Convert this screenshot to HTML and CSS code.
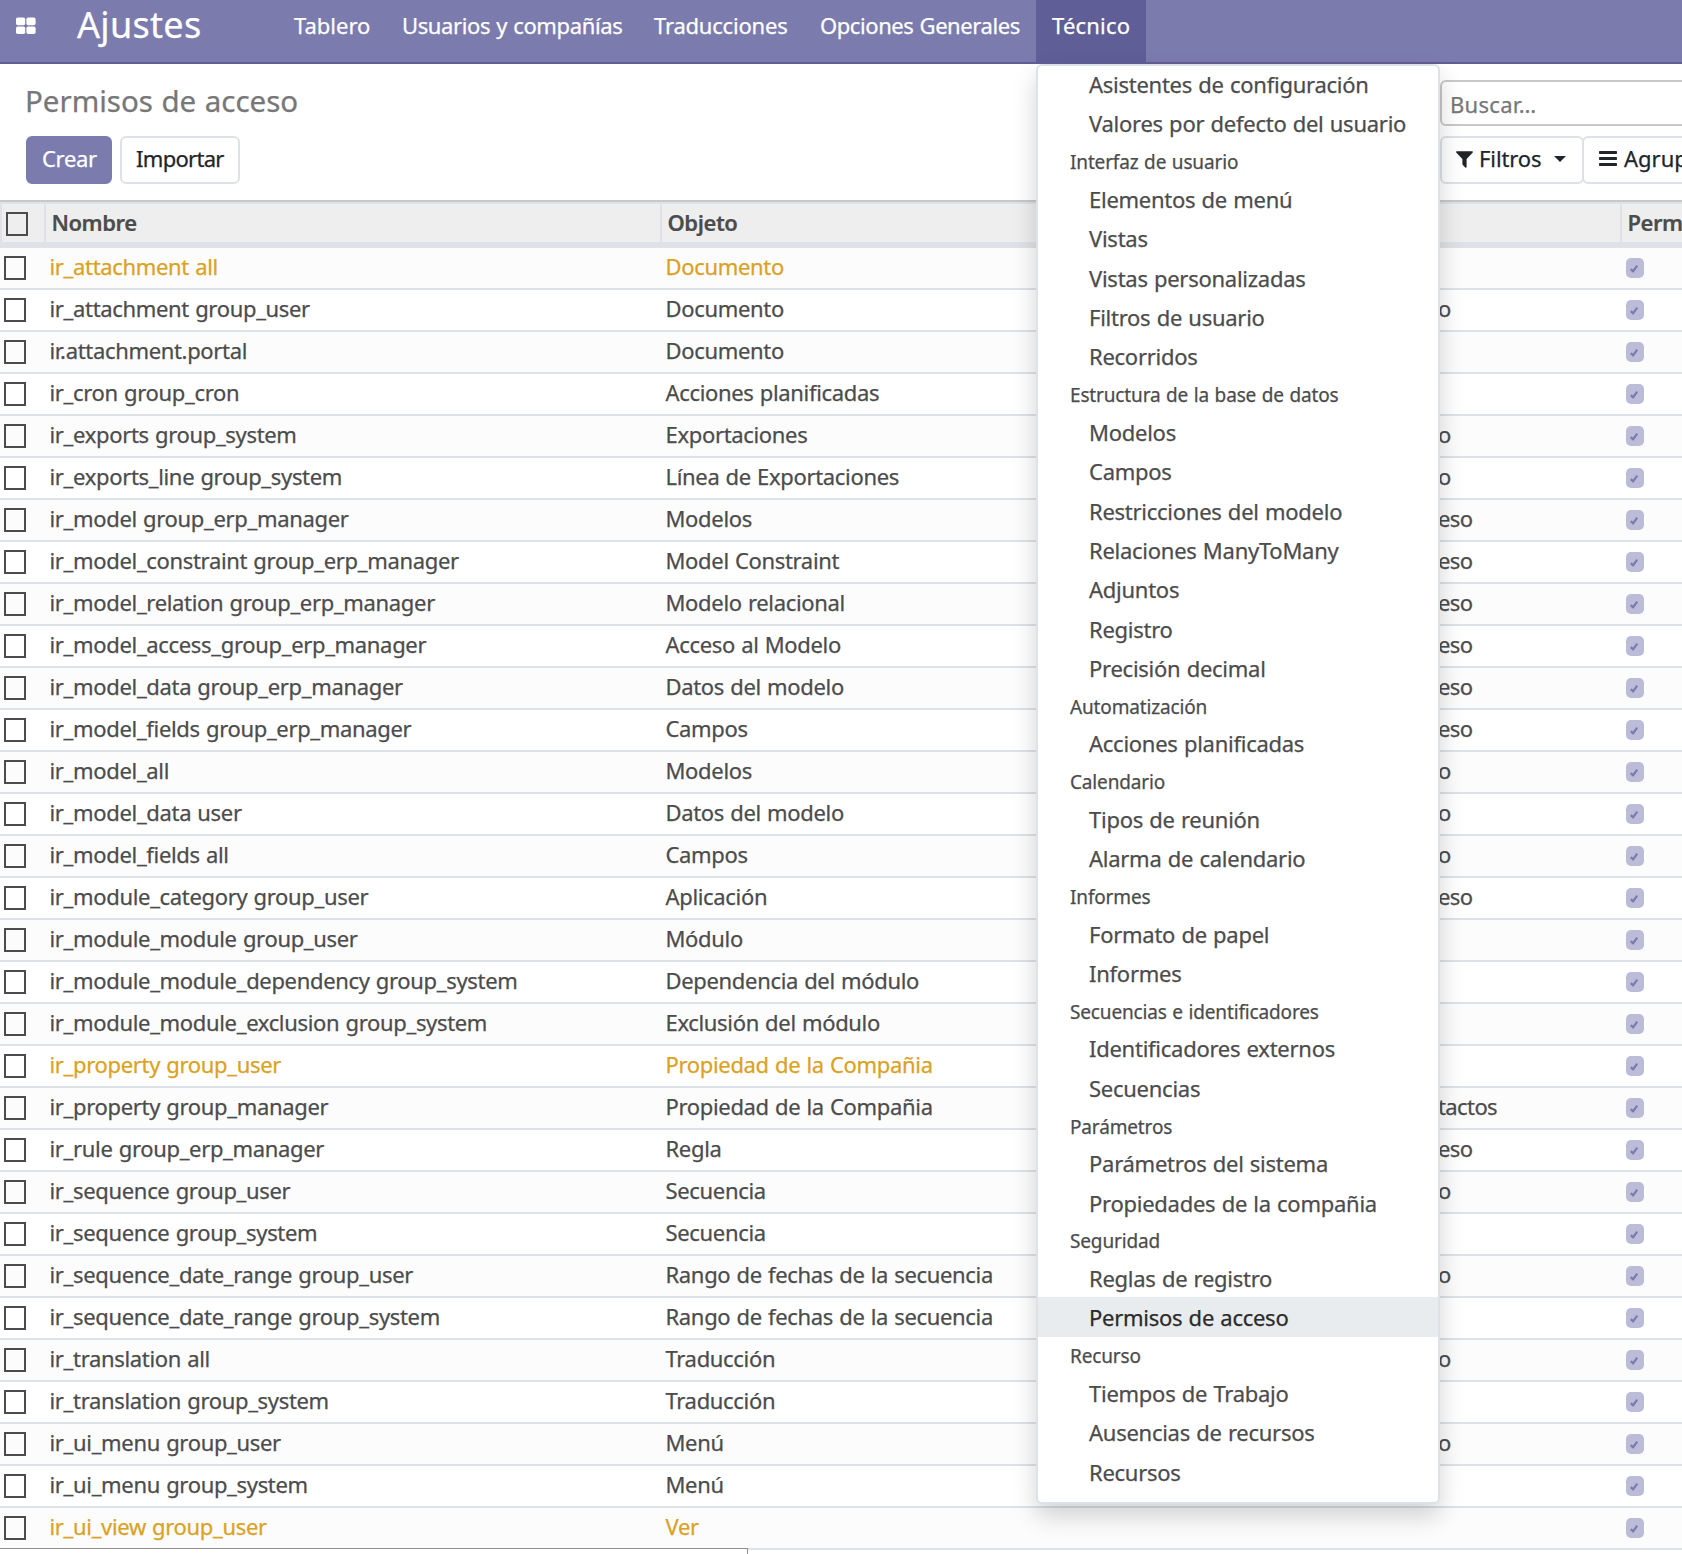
FILE: index.html
```html
<!DOCTYPE html>
<html lang="es">
<head>
<meta charset="utf-8">
<title>Ajustes - Permisos de acceso</title>
<link rel="stylesheet" href="styles.css">
</head>
<body>
<svg class="defs" width="0" height="0">
  <symbol id="tick" viewBox="0 0 18 20">
    <path d="M4.8 11.2 L7.1 13.3 L11.2 7.6" fill="none" stroke="#7c7bad" stroke-width="2.3"/>
  </symbol>
</svg>
<header class="navbar">
  <a class="apps"><svg width="20" height="18" viewBox="0 0 20 18" fill="#fff"><rect x="0" y="0.5" width="9.2" height="7.8" rx="1.8"/><rect x="10.4" y="0.5" width="9.2" height="7.8" rx="1.8"/><rect x="0" y="9.4" width="9.2" height="7.6" rx="1.8"/><rect x="10.4" y="9.4" width="9.2" height="7.6" rx="1.8"/></svg></a>
  <span class="brand">Ajustes</span>
  <nav class="menu">
    <a>Tablero</a>
    <a class="n2">Usuarios y compañías</a>
    <a class="n3">Traducciones</a>
    <a class="n4">Opciones Generales</a>
    <a class="active">Técnico</a>
  </nav>
  <div class="dropdown">
    <a>Asistentes de configuración</a>
    <a>Valores por defecto del usuario</a>
    <h6>Interfaz de usuario</h6>
    <a>Elementos de menú</a>
    <a>Vistas</a>
    <a>Vistas personalizadas</a>
    <a>Filtros de usuario</a>
    <a>Recorridos</a>
    <h6>Estructura de la base de datos</h6>
    <a>Modelos</a>
    <a>Campos</a>
    <a>Restricciones del modelo</a>
    <a>Relaciones ManyToMany</a>
    <a>Adjuntos</a>
    <a>Registro</a>
    <a>Precisión decimal</a>
    <h6>Automatización</h6>
    <a>Acciones planificadas</a>
    <h6>Calendario</h6>
    <a>Tipos de reunión</a>
    <a>Alarma de calendario</a>
    <h6>Informes</h6>
    <a>Formato de papel</a>
    <a>Informes</a>
    <h6>Secuencias e identificadores</h6>
    <a>Identificadores externos</a>
    <a>Secuencias</a>
    <h6>Parámetros</h6>
    <a>Parámetros del sistema</a>
    <a>Propiedades de la compañia</a>
    <h6>Seguridad</h6>
    <a>Reglas de registro</a>
    <a class="hover">Permisos de acceso</a>
    <h6>Recurso</h6>
    <a>Tiempos de Trabajo</a>
    <a>Ausencias de recursos</a>
    <a>Recursos</a>
  </div>
</header>
<section class="panel">
  <div class="panel-left">
    <h1>Permisos de acceso</h1>
    <div class="buttons"><span class="btn primary">Crear</span><span class="btn">Importar</span></div>
  </div>
  <div class="panel-right">
    <div class="search">Buscar…</div>
    <div class="filters">
      <span class="btn filter"><svg width="17" height="17" viewBox="0 0 17 17"><path d="M0.6 0.3H16.4Q17.2 0.8 16.6 1.7L10.6 8V16.2Q10 17 9.2 16.4L6.4 13.6V8L0.4 1.7Q-0.2 0.8 0.6 0.3Z" fill="#212529"/></svg><span class="ftext">Filtros</span><svg class="caret" width="12" height="6" viewBox="0 0 12 6"><path d="M0 0H12L6 6Z" fill="#212529"/></svg></span>
      <span class="btn group"><svg width="18" height="15" viewBox="0 0 18 15" fill="#212529"><rect width="18" height="3" rx="0.8"/><rect y="6" width="18" height="3" rx="0.8"/><rect y="12" width="18" height="3" rx="0.8"/></svg><span class="gtext">Agrupar por</span></span>
    </div>
  </div>
</section>
<main class="list">
  <div class="row head"><span><i class="cb"></i></span><span>Nombre</span><span>Objeto</span><span></span><span>Permiso</span></div>
  <div class="row warn"><i class="cb"></i><span>ir_attachment all</span><span>Documento</span><span class="g"></span><svg class="on"><use href="#tick"/></svg></div>
  <div class="row"><i class="cb"></i><span>ir_attachment group_user</span><span>Documento</span><span class="g">o</span><svg class="on"><use href="#tick"/></svg></div>
  <div class="row"><i class="cb"></i><span>ir.attachment.portal</span><span>Documento</span><span class="g"></span><svg class="on"><use href="#tick"/></svg></div>
  <div class="row"><i class="cb"></i><span>ir_cron group_cron</span><span>Acciones planificadas</span><span class="g"></span><svg class="on"><use href="#tick"/></svg></div>
  <div class="row"><i class="cb"></i><span>ir_exports group_system</span><span>Exportaciones</span><span class="g">o</span><svg class="on"><use href="#tick"/></svg></div>
  <div class="row"><i class="cb"></i><span>ir_exports_line group_system</span><span>Línea de Exportaciones</span><span class="g">o</span><svg class="on"><use href="#tick"/></svg></div>
  <div class="row"><i class="cb"></i><span>ir_model group_erp_manager</span><span>Modelos</span><span class="g">eso</span><svg class="on"><use href="#tick"/></svg></div>
  <div class="row"><i class="cb"></i><span>ir_model_constraint group_erp_manager</span><span>Model Constraint</span><span class="g">eso</span><svg class="on"><use href="#tick"/></svg></div>
  <div class="row"><i class="cb"></i><span>ir_model_relation group_erp_manager</span><span>Modelo relacional</span><span class="g">eso</span><svg class="on"><use href="#tick"/></svg></div>
  <div class="row"><i class="cb"></i><span>ir_model_access_group_erp_manager</span><span>Acceso al Modelo</span><span class="g">eso</span><svg class="on"><use href="#tick"/></svg></div>
  <div class="row"><i class="cb"></i><span>ir_model_data group_erp_manager</span><span>Datos del modelo</span><span class="g">eso</span><svg class="on"><use href="#tick"/></svg></div>
  <div class="row"><i class="cb"></i><span>ir_model_fields group_erp_manager</span><span>Campos</span><span class="g">eso</span><svg class="on"><use href="#tick"/></svg></div>
  <div class="row"><i class="cb"></i><span>ir_model_all</span><span>Modelos</span><span class="g">o</span><svg class="on"><use href="#tick"/></svg></div>
  <div class="row"><i class="cb"></i><span>ir_model_data user</span><span>Datos del modelo</span><span class="g">o</span><svg class="on"><use href="#tick"/></svg></div>
  <div class="row"><i class="cb"></i><span>ir_model_fields all</span><span>Campos</span><span class="g">o</span><svg class="on"><use href="#tick"/></svg></div>
  <div class="row"><i class="cb"></i><span>ir_module_category group_user</span><span>Aplicación</span><span class="g">eso</span><svg class="on"><use href="#tick"/></svg></div>
  <div class="row"><i class="cb"></i><span>ir_module_module group_user</span><span>Módulo</span><span class="g"></span><svg class="on"><use href="#tick"/></svg></div>
  <div class="row"><i class="cb"></i><span>ir_module_module_dependency group_system</span><span>Dependencia del módulo</span><span class="g"></span><svg class="on"><use href="#tick"/></svg></div>
  <div class="row"><i class="cb"></i><span>ir_module_module_exclusion group_system</span><span>Exclusión del módulo</span><span class="g"></span><svg class="on"><use href="#tick"/></svg></div>
  <div class="row warn"><i class="cb"></i><span>ir_property group_user</span><span>Propiedad de la Compañia</span><span class="g"></span><svg class="on"><use href="#tick"/></svg></div>
  <div class="row"><i class="cb"></i><span>ir_property group_manager</span><span>Propiedad de la Compañia</span><span class="g">tactos</span><svg class="on"><use href="#tick"/></svg></div>
  <div class="row"><i class="cb"></i><span>ir_rule group_erp_manager</span><span>Regla</span><span class="g">eso</span><svg class="on"><use href="#tick"/></svg></div>
  <div class="row"><i class="cb"></i><span>ir_sequence group_user</span><span>Secuencia</span><span class="g">o</span><svg class="on"><use href="#tick"/></svg></div>
  <div class="row"><i class="cb"></i><span>ir_sequence group_system</span><span>Secuencia</span><span class="g"></span><svg class="on"><use href="#tick"/></svg></div>
  <div class="row"><i class="cb"></i><span>ir_sequence_date_range group_user</span><span>Rango de fechas de la secuencia</span><span class="g">o</span><svg class="on"><use href="#tick"/></svg></div>
  <div class="row"><i class="cb"></i><span>ir_sequence_date_range group_system</span><span>Rango de fechas de la secuencia</span><span class="g"></span><svg class="on"><use href="#tick"/></svg></div>
  <div class="row"><i class="cb"></i><span>ir_translation all</span><span>Traducción</span><span class="g">o</span><svg class="on"><use href="#tick"/></svg></div>
  <div class="row"><i class="cb"></i><span>ir_translation group_system</span><span>Traducción</span><span class="g"></span><svg class="on"><use href="#tick"/></svg></div>
  <div class="row"><i class="cb"></i><span>ir_ui_menu group_user</span><span>Menú</span><span class="g">o</span><svg class="on"><use href="#tick"/></svg></div>
  <div class="row"><i class="cb"></i><span>ir_ui_menu group_system</span><span>Menú</span><span class="g"></span><svg class="on"><use href="#tick"/></svg></div>
  <div class="row warn"><i class="cb"></i><span>ir_ui_view group_user</span><span>Ver</span><span class="g"></span><svg class="on"><use href="#tick"/></svg></div>
</main>
<div class="status"></div>
</body>
</html>
```
FILE: styles.css
```css
* { box-sizing: border-box; }
html, body { height: 100%; }
body {
  margin: 0;
  position: relative;
  overflow: hidden;
  background: #fff;
  color: #4c4c4c;
  font: 22px/30px "Noto Sans", "Open Sans", sans-serif;
  letter-spacing: -0.33px;
  word-spacing: 0.8px;
  white-space: nowrap;
  -webkit-text-stroke: 0.25px;
}
.defs { position: absolute; }

/* top bar */
.navbar {
  position: relative;
  display: flex;
  height: 64px;
  background: #7c7bad;
  border-bottom: 2px solid #5f5e97;
  color: #fff;
}
.apps { width: 77px; padding: 17px 0 0 16px; line-height: 0; }
.brand { width: 201px; font-size: 36px; line-height: 50px; letter-spacing: 0.3px; }
.menu { display: flex; }
.menu a { height: 62px; padding: 10px 16px 0; letter-spacing: -0.38px; }
.menu a:first-child { width: 108px; letter-spacing: 0; }
.menu .n2 { width: 252px; }
.menu .n3 { width: 166px; letter-spacing: -0.2px; }
.menu .n4 { width: 232px; letter-spacing: -0.42px; }
.menu .active { width: 110px; background: #5f5e97; letter-spacing: 0.2px; }

/* open menu over the list */
.dropdown {
  position: absolute;
  left: 1036px;
  top: 64px;
  z-index: 5;
  width: 404px;
  height: 1440px;
  display: flex;
  flex-direction: column;
  background: #fff;
  border: 2px solid #dee2e6;
  border-radius: 6px;
  box-shadow: 0 12px 24px rgba(0, 0, 0, 0.175);
  color: #4c4c4c;
}
.dropdown a { height: 39.4px; flex: none; padding: 5px 0 0 51px; letter-spacing: -0.26px; }
.dropdown a:first-child { height: 37.4px; padding-top: 3px; }
.dropdown .hover { background: #e9ecef; color: #2b2b2b; }
.dropdown h6 { height: 36px; flex: none; margin: 0; padding: 4.5px 0 0 32px; font-size: 19px; font-weight: 400; letter-spacing: -0.15px; }

/* control panel */
.panel { display: flex; height: 138px; border-bottom: 2px solid #c8c8c8; }
.panel-left { width: 1440px; padding: 17px 0 0 26px; }
.panel h1 { margin: 0 0 0 -1px; height: 55px; font-size: 29.5px; line-height: 40px; font-weight: 400; color: #777; letter-spacing: 0; }
.buttons { display: flex; gap: 8px; }
.btn {
  display: flex;
  height: 48px;
  width: 120px;
  padding: 5px 0 0 14px;
  border: 2px solid #dee2e6;
  border-radius: 6px;
  color: #212529;
  letter-spacing: -0.7px;
}
.primary { width: 86px; background: #7c7bad; border-color: #7c7bad; color: #fff; letter-spacing: -0.3px; }
.panel-right { flex: 1; overflow: hidden; padding-top: 16px; }
.search { height: 46px; width: 300px; margin-bottom: 10px; border: 2px solid #c8c8c8; border-radius: 6px; padding: 7px 0 0 8px; color: #777; letter-spacing: 0.3px; }
.filters { display: flex; width: 400px; }
.filter { width: 144px; letter-spacing: -0.1px; }
.filter svg, .group svg { margin-top: 8px; }
.ftext { width: 67px; margin-left: 6px; }
.filter .caret { margin: 13px 0 0 8px; }
.group { width: 220px; margin-left: -2px; padding-left: 15px; }
.group svg { margin-top: 8px; }
.gtext { margin-left: 7px; letter-spacing: 0; }

/* records */
.row {
  display: grid;
  grid-template-columns: 44px 616px 778px 182px 62px;
  height: 42px;
  background: #fff;
  border-bottom: 2px solid #dee2e6;
}
.row:nth-child(even) { background: #fcfcfc; }
.row > span { padding: 3px 0 0 5.5px; overflow: hidden; }
.row .g { padding-left: 0; letter-spacing: -0.6px; }
.warn { color: #daa21f; }
.cb { width: 22px; height: 24px; margin: 8px 0 0 4px; border: 2px solid #4c4c4c; }
.on { width: 18px; height: 20px; margin: 10px 0 0 6px; border-radius: 5px; background: #bcbbd8; }
.head {
  height: 46px;
  background: #eee;
  border-top: 2px solid #dee2e6;
  border-bottom: 6px solid #dee2e6;
  font-weight: 600;
  letter-spacing: -0.45px;
  -webkit-text-stroke: 0.2px;
}
.row.head > span { padding-left: 5.5px; border-left: 2px solid #dfe1e4; }
.row.head > span:nth-child(4) { border-left: 0; }
.head .cb { display: block; margin: 5px 0 0 -1.5px; }

/* browser link hint in the corner */
.status { position: absolute; left: 0; bottom: 0; width: 748px; height: 6px; background: #fff; border: solid #8f8f8f; border-width: 1px 1px 0 0; }
```
